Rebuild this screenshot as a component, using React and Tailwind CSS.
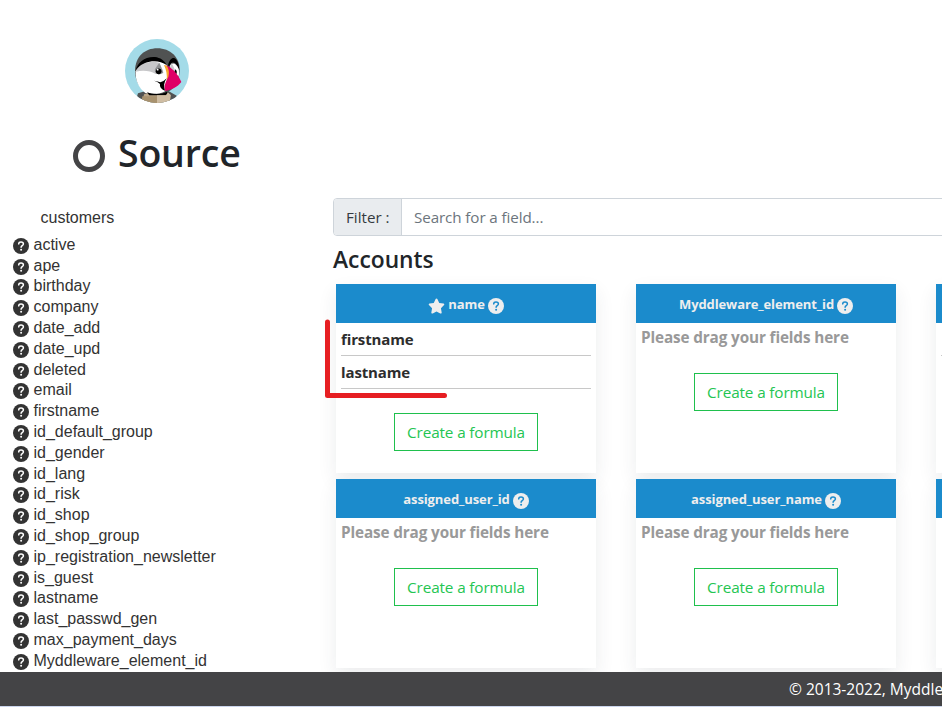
import { FaStar } from "react-icons/fa6";

const sourceFields = [
  "active", "ape", "birthday", "company", "date_add", "date_upd", "deleted",
  "email", "firstname", "id_default_group", "id_gender", "id_lang", "id_risk",
  "id_shop", "id_shop_group", "ip_registration_newsletter", "is_guest",
  "lastname", "last_passwd_gen", "max_payment_days", "Myddleware_element_id",
];

const targets = [
  { name: "name", required: true, fields: ["firstname", "lastname"] },
  { name: "Myddleware_element_id", fields: [] },
  { fields: [""], partial: true },
  { name: "assigned_user_id", fields: [] },
  { name: "assigned_user_name", fields: [] },
  { fields: [], partial: true },
];

function HelpIcon({ mark, className }) {
  return (
    <svg className={"h-4 w-4 shrink-0 " + className} viewBox="0 0 16 16" fill="none">
      <circle cx="8" cy="8" r="8" fill="currentColor" />
      <path d="M5.7 5.9 C5.8 4.6 6.8 4.1 8 4.1 C9.4 4.1 10.4 4.9 10.4 6 C10.4 7.5 8.1 7.6 8.1 9.2" stroke={mark} strokeWidth="1.5" strokeLinecap="round" />
      <circle cx="8.1" cy="11.7" r="1" fill={mark} />
    </svg>
  );
}

function PuffinLogo() {
  return (
    <svg className="h-16 w-16" viewBox="45 27 192 192">
      <defs>
        <clipPath id="disc"><circle cx="141" cy="123" r="96" /></clipPath>
      </defs>
      <g clipPath="url(#disc)">
        <rect x="45" y="27" width="192" height="192" fill="#a4dbe8" />
        <path d="M74 222 L84 190 L110 182 H174 L200 197 L205 222Z" fill="#505252" />
        <path d="M75 124 C75 80 104 55 142 55 C181 55 209 82 209 119 C209 153 190 188 155 190 H126 C96 188 75 158 75 124Z" fill="#505252" />
        <path d="M77 124 C80 106 105 90 131 91 C151 92 163 96 170 105 L185 139 L165 184 C150 194 125 194 106 189 C87 176 75 151 77 124Z" fill="#fff" />
        <path d="M77 123 C86 104 112 93 137 96 L148 98 L160 124 L137 132 C121 122 99 120 77 125Z" fill="#c7c7c9" />
        <path d="M148 98 L135 117 C132 132 145 137 160 128Z" fill="#8f9092" />
        <path d="M76 124 C82 97 105 79 135 81 C151 83 163 91 171 106 C155 95 137 91 119 95 C99 99 86 108 76 124Z" fill="#000" />
        <path d="M174 106 C178 90 185 83 192 84 C202 87 207 102 208 121 C202 106 195 95 186 98 C181 101 179 104 178 110Z" fill="#000" />
        <path d="M179 109 C184 96 198 97 206 117 C209 132 206 140 203 143 L184 121Z" fill="#fff" />
        <path d="M185 99 L194 118 L196 134 L180 113Z" fill="#c7c7c9" />
        <path d="M196 118 Q203 124 199 133 L193 127Z" fill="#000" />
        <circle cx="146" cy="124" r="8.5" fill="#000" />
        <circle cx="143" cy="119" r="2.8" fill="#fff" />
        <path d="M162 105 C175 106 183 120 178 137 L170 152 C172 135 169 120 162 105Z" fill="#f9a72b" />
        <path d="M168 105 C182 112 203 128 214 156 C202 171 185 181 165 182 C160 169 168 154 175 140 C179 127 176 113 168 105Z" fill="#df0067" />
        <path d="M170 145 C162 156 160 170 165 182 C151 177 149 168 150 162 Q143 155 132 152 Q144 154 151 157 Q161 155 170 145Z" fill="#000" />
        <path d="M112 187 C128 194 157 194 171 185 L172 199 H114Z" fill="#000" />
        <path d="M102 193 L113 190 L118 196 H168 L174 188 L182 195 L179 220 H97Z" fill="#b9a588" />
        <path d="M141 196 H168 L174 188 L182 195 L179 220 H141Z" fill="#cfbda3" />
        <path d="M97 199 H141 V220 H94Z" fill="#a8926f" />
      </g>
    </svg>
  );
}

function FormulaButton() {
  return (
    <button className="h-[38px] w-36 border border-[#1fc04d] text-[15.3px] font-normal tracking-[-0.13px] whitespace-nowrap text-[#24c552]">
      Create a formula
    </button>
  );
}

function TargetCard({ target }) {
  return (
    <article className="flex h-[189px] w-[260px] shrink-0 flex-col bg-white shadow-[0_8px_18px_rgba(45,55,65,0.09)]">
      <h3 className="flex h-[39px] shrink-0 items-center justify-center gap-[3px] bg-[#1b8bcc] pt-1 text-[13px] leading-[20px] font-bold text-[#eee]">
        {target.required && <FaStar className="h-4 w-[17px]" />}
        {target.name && <span className="-mt-1 tracking-[-0.1px]">{target.name}</span>}
        {target.name && <HelpIcon mark="#1b8bcc" className="text-[#eee]" />}
      </h3>
      <div className="px-[5px] font-bold tracking-[-0.13px]">
        {target.fields.map((field) => (
          <p key={field} className="h-[33px] border-b border-[#c8c8c8] text-[15px] leading-[32px] text-[#2d2d2d]">{field}</p>
        ))}
        {target.name && target.fields.length === 0 && (
          <p className="h-[26px] text-[15.3px] leading-[29px] whitespace-nowrap text-[#999]">Please drag your fields here</p>
        )}
      </div>
      {!target.partial && <div className="mt-6 flex justify-center"><FormulaButton /></div>}
    </article>
  );
}

export default function App() {
  return (
    <div className="relative flex h-[707px] w-[942px] flex-col overflow-hidden bg-white font-['Open_Sans','Noto_Sans',sans-serif] text-[#212529]">
      <main className="flex h-[672px] shrink-0 overflow-hidden">
        <aside className="w-[333px] shrink-0">
          <div className="mt-[39px] ml-[125px]"><PuffinLogo /></div>
          <div className="mt-[19px] ml-[73px] flex h-[60px] items-center gap-[13px]">
            <span className="mt-2 h-8 w-8 rounded-full border-[5px] border-[#444446]" />
            <h1 className="pt-[2px] text-[37.5px] leading-[60px] font-semibold tracking-[-0.2px]">Source</h1>
          </div>
          <div className="mt-[24px] font-['Liberation_Sans',Arial,sans-serif] text-[16px] text-[#333]">
            <p className="ml-[40.5px] h-[28.9px] leading-[24px]">customers</p>
            <ul>
              {sourceFields.map((field) => (
                <li key={field} className="flex h-[20.8px] items-center gap-[4.5px] pl-[13px] leading-[20.8px]">
                  <HelpIcon mark="#fff" className="mt-px" />
                  <span>{field}</span>
                </li>
              ))}
            </ul>
          </div>
        </aside>
        <section className="w-[900px] shrink-0 pt-[198px]">
          <div className="flex h-[38px] rounded border border-[#ced4da] text-[15.2px] leading-[36px]">
            <label className="w-[68px] rounded-l-[3px] border-r border-[#ced4da] bg-[#e9ecef] pl-3 text-[#343a40]">Filter :</label>
            <span className="pl-3 tracking-[-0.1px] text-[#6c757d]">Search for a field...</span>
          </div>
          <h2 className="h-12 text-[22.8px] leading-[47px] font-semibold">Accounts</h2>
          <div className="grid grid-cols-[260px_260px_260px] gap-x-10 gap-y-1.5 pl-[3px]">
            {targets.map((target, index) => <TargetCard key={index} target={target} />)}
          </div>
        </section>
      </main>
      <footer className="z-10 h-[35px] shrink-0 border-b border-[#cbd5ec] bg-[#444446] pl-[789px] text-[15.5px] leading-[34px] whitespace-nowrap text-white">
        © 2013-2022, Myddleware
      </footer>
      <svg className="pointer-events-none absolute top-[315px] left-[320px] h-[90px] w-[135px]" viewBox="0 0 135 90" fill="none">
        <path d="M7.5 7 V80.5 H124.5" stroke="#e61e22" strokeWidth="5" strokeLinecap="round" strokeLinejoin="round" />
      </svg>
    </div>
  );
}
